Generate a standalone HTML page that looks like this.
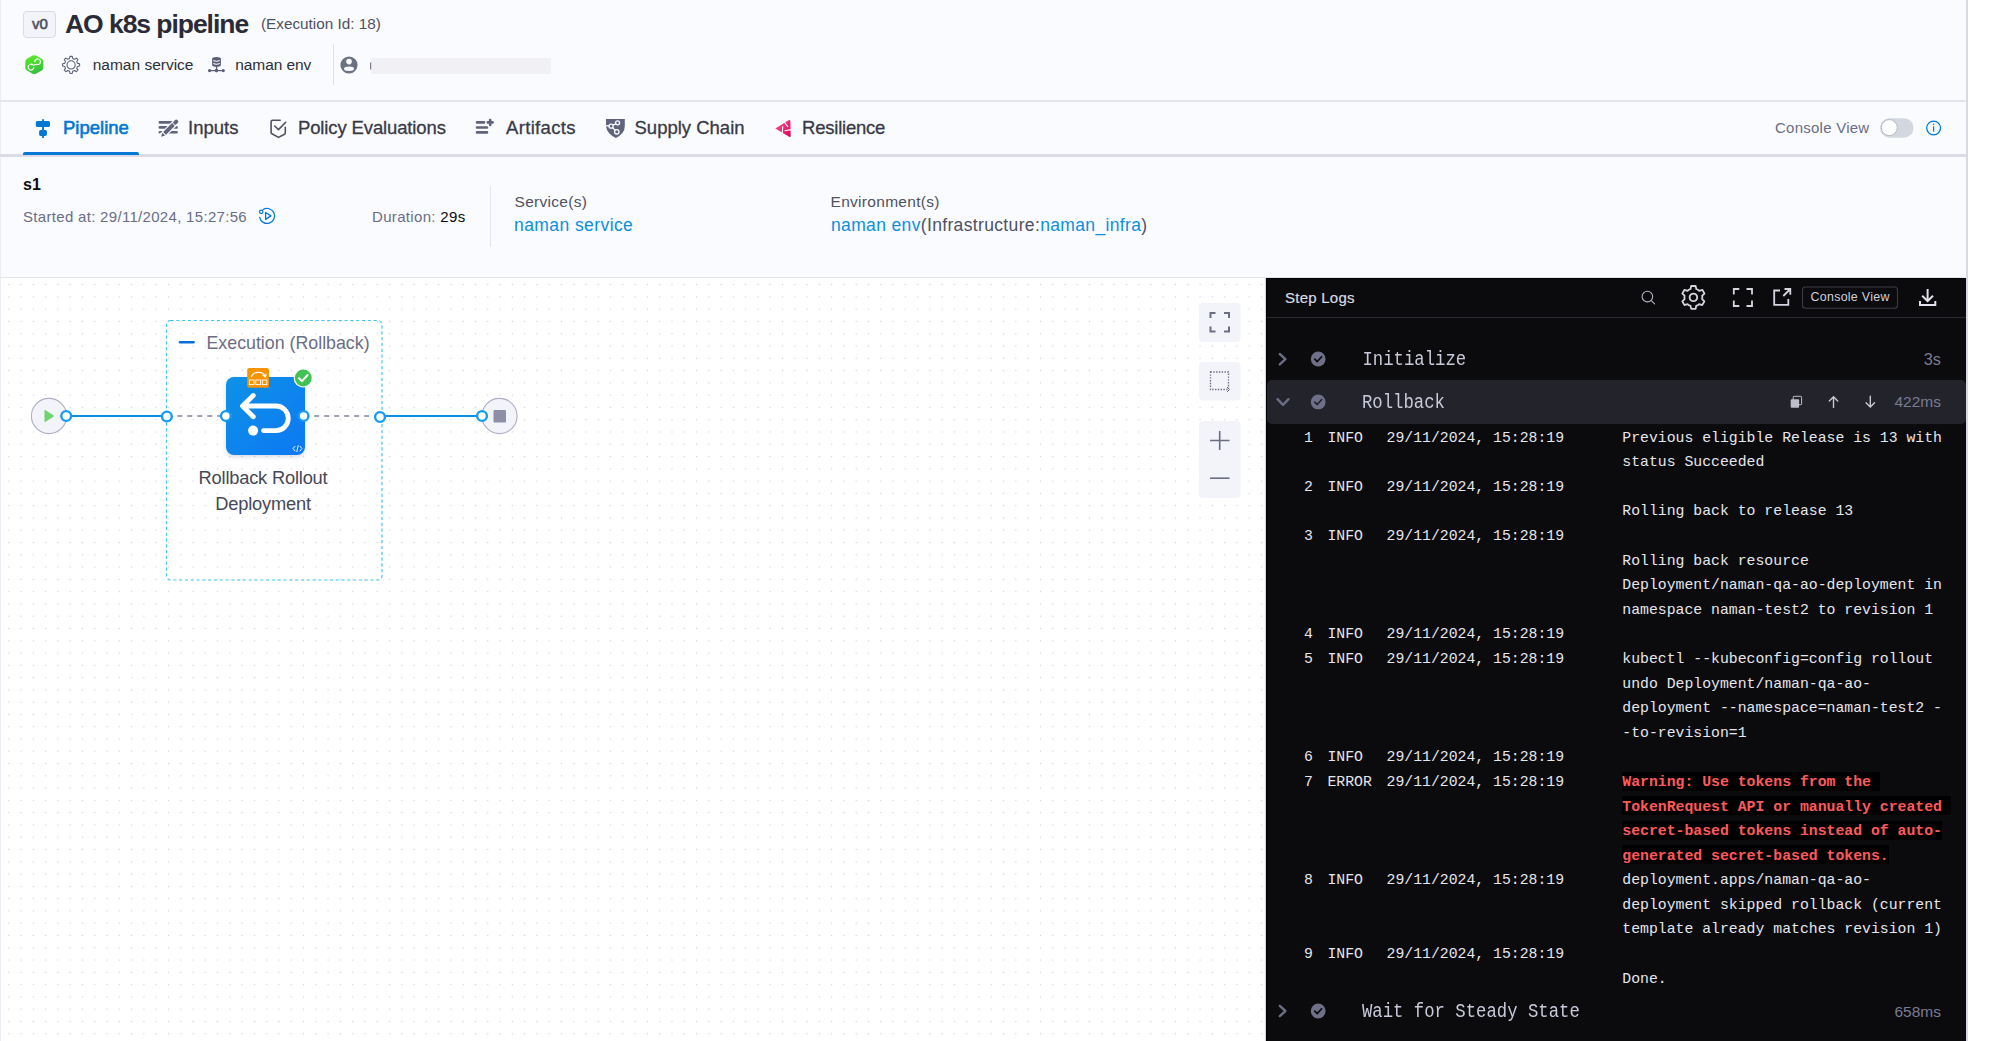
<!DOCTYPE html>
<html><head><meta charset="utf-8">
<style>
*{box-sizing:border-box}
html,body{margin:0;padding:0}
body{width:2000px;height:1041px;overflow:hidden;background:#fff;position:relative;font-family:"Liberation Sans",sans-serif;color:#22222a}
.a{position:absolute;white-space:pre;line-height:1}
.m{font-family:"Liberation Mono",monospace}
svg{position:absolute;overflow:visible}
#main{position:absolute;left:0;top:0;width:1966px;height:1041px;background:#fafbfe;border-left:1px solid #ececf2}
#rb{position:absolute;left:1966px;top:0;width:2px;height:1041px;background:#d9d9e3}
.hl{position:absolute;left:0;width:1966px;background:#e4e4ec}
#canvas{position:absolute;left:0;top:278px;width:1266px;height:763px;background-color:#fff;border-left:1px solid #ececf2;
 background-image:radial-gradient(circle at center,#d2d3e0 0.7px,rgba(255,255,255,0) 1.0px);
 background-size:12.285px 12.285px;background-position:1.66px 0.46px}
#logs{position:absolute;left:1266px;top:278px;width:700px;height:763px;background:#0b0b0d;border-left:1px solid #000;border-top:1px solid #000;box-shadow:-1px 0 1px #d9dae5}
.tab{font-size:18.5px;color:#383946;-webkit-text-stroke:0.3px #383946}
.lg{font-size:14.8px;line-height:24.6px;color:#e6e6ec}
.er{color:#ff5a5a;font-weight:bold}
</style></head>
<body>
<div id="main"></div>
<div id="rb"></div>

<!-- HEADER -->
<div class="a" style="left:23px;top:11px;width:33px;height:27px;border:1px solid #d9dae5;border-radius:4px;background:#f3f3fa"></div>
<div class="a" style="left:32px;top:15.8px;font-size:15px;color:#4f5162;-webkit-text-stroke:0.6px #4f5162">v0</div>
<div class="a" style="left:65px;top:10.5px;font-size:26.5px;font-weight:bold;color:#2a2b36;letter-spacing:-1.05px">AO k8s pipeline</div>
<div class="a" style="left:261px;top:16px;font-size:15.3px;color:#4f5162">(Execution Id: 18)</div>

<div class="a" style="left:92.7px;top:56.5px;font-size:15.5px;color:#2d2e3a">naman service</div>
<div class="a" style="left:235.3px;top:56.5px;font-size:15.5px;letter-spacing:-0.1px;color:#2d2e3a">naman env</div>
<div class="a" style="left:332.5px;top:44px;width:1px;height:41px;background:#e1e1ea"></div>
<div class="a" style="left:371px;top:57.5px;width:180px;height:16px;background:#f0f0f5"></div>

<div class="hl" style="top:100px;height:1.5px"></div>
<div class="hl" style="top:154px;height:2.5px;background:#dcdce6"></div>
<div class="hl" style="top:277px;height:1px"></div>

<!-- HEADER / TAB ICONS -->
<svg style="left:0;top:0" width="2000" height="278" viewBox="0 0 2000 278">
 <defs>
  <linearGradient id="hg" x1="0" y1="0" x2="0.3" y2="1"><stop offset="0" stop-color="#5fee26"/><stop offset="1" stop-color="#38c03c"/></linearGradient>
  <linearGradient id="pg" x1="0" y1="0" x2="1" y2="1"><stop offset="0" stop-color="#f65a98"/><stop offset="1" stop-color="#df0058"/></linearGradient>
 </defs>
 <!-- green hexagon -->
 <path d="M32.6 55.6 Q34.3 54.7 36 55.6 L41.6 58.8 Q43.3 59.8 43.3 61.7 L43.3 67.7 Q43.3 69.6 41.6 70.6 L36 73.8 Q34.3 74.7 32.6 73.8 L27 70.6 Q25.3 69.6 25.3 67.7 L25.3 61.7 Q25.3 59.8 27 58.8 Z" fill="url(#hg)"/>
 <path d="M33.2 65.2 A2.9 2.9 0 1 0 33.9 67.3 M33.2 65.2 L36.6 64.3 A2.8 2.8 0 1 0 34.9 61.6" fill="none" stroke="#fff" stroke-width="1.15" stroke-linecap="round"/>
 <!-- gear outline -->
 <g transform="translate(71.1 64.9)" fill="none" stroke="#5c5e78" stroke-width="1.05" stroke-linejoin="round">
  <path d="M-1.54 -6.42 L-1.14 -8.52 L1.14 -8.52 L1.54 -6.42 L3.45 -5.63 L5.22 -6.84 L6.84 -5.22 L5.63 -3.45 L6.42 -1.54 L8.52 -1.14 L8.52 1.14 L6.42 1.54 L5.63 3.45 L6.84 5.22 L5.22 6.84 L3.45 5.63 L1.54 6.42 L1.14 8.52 L-1.14 8.52 L-1.54 6.42 L-3.45 5.63 L-5.22 6.84 L-6.84 5.22 L-5.63 3.45 L-6.42 1.54 L-8.52 1.14 L-8.52 -1.14 L-6.42 -1.54 L-5.63 -3.45 L-6.84 -5.22 L-5.22 -6.84 L-3.45 -5.63 Z"/>
  <circle cx="0" cy="0" r="4.1"/>
 </g>
 <!-- server/env icon -->
 <g fill="#5c5e78">
  <path d="M212.1 58.8 Q212.1 56.9 216.5 56.9 Q220.9 56.9 220.9 58.8 V65 Q220.9 66.8 216.5 66.8 Q212.1 66.8 212.1 65 Z"/>
  <rect x="215.9" y="66" width="1.3" height="4.6"/>
  <rect x="208.5" y="70" width="15.8" height="1.2"/>
  <circle cx="209.6" cy="70.6" r="1.6"/><circle cx="216.5" cy="70.6" r="1.8"/><circle cx="223.2" cy="70.6" r="1.6"/>
 </g>
 <path d="M213.3 60.6 Q216.5 62 219.7 60.6 M213.3 63.6 Q216.5 65 219.7 63.6" fill="none" stroke="#fafbfe" stroke-width="1.1"/>
 <!-- user icon -->
 <circle cx="349" cy="65" r="8.6" fill="#6b7280"/>
 <circle cx="349" cy="61.6" r="2.8" fill="#fafbfe"/>
 <ellipse cx="349" cy="68.8" rx="5" ry="2.2" fill="#fafbfe"/>
 <rect x="370" y="62.5" width="1.2" height="7" fill="#7a7b90"/>
 <!-- pipeline tab icon -->
 <g fill="#0278d5">
  <rect x="42.1" y="118.9" width="1.9" height="19.2" rx="0.9"/>
  <rect x="35.8" y="121.1" width="14.2" height="5.9" rx="1.6"/>
  <rect x="39.1" y="130" width="7.8" height="5.9" rx="1.6"/>
 </g>
 <!-- inputs icon -->
 <g stroke="#61637d" stroke-width="2.6" stroke-linecap="round" fill="none">
  <path d="M159.8 122.4 H172.5 M159.8 127.4 H167.5 M159.8 132.2 H162.5 M168.5 132.2 H176.6 M173.5 127.4 H176.6"/>
 </g>
 <path d="M161.5 136.5 L178.8 119.2" stroke="#fafbfe" stroke-width="6.4" fill="none"/>
 <g stroke="#61637d" fill="none">
  <path d="M164.6 133.3 L173.4 124.5" stroke-width="3.9"/>
  <path d="M175.2 122.7 L176.3 121.6" stroke-width="3.9" stroke-linecap="round"/>
 </g>
 <path d="M161.1 136.8 L162.3 132.7 L165.2 135.6 Z" fill="#61637d"/>
 <!-- policy icon -->
 <path d="M280.2 120.2 H272.7 Q271.1 120.2 271.1 121.8 V132.6 Q271.1 133.4 271.9 133.8 L278.5 137.4 L284.5 134.2 Q285.3 133.7 285.3 132.8 V127.2" fill="none" stroke="#4f5162" stroke-width="1.6" stroke-linecap="round" stroke-linejoin="round"/>
 <path d="M274.7 126 L278.5 129.6 L285.7 122.3" fill="none" stroke="#4f5162" stroke-width="1.6" stroke-linecap="round" stroke-linejoin="round"/>
 <!-- artifacts icon -->
 <g stroke="#61637d" stroke-width="2.6" stroke-linecap="round" fill="none">
  <path d="M477 122.4 H484 M477 127.5 H487 M477 132.4 H487 M487.8 122.4 H492.6 M490.2 120 V124.9"/>
 </g>
 <!-- supply chain icon -->
 <path d="M606 119 H624.8 V126 Q624.8 133.5 615.8 138 Q606.8 133.5 606 126 Z" fill="#61637d"/>
 <g fill="none" stroke="#fafbfe" stroke-width="1.3">
  <circle cx="617.6" cy="122.8" r="2"/><circle cx="611.1" cy="126.2" r="2"/><circle cx="616.8" cy="131.8" r="2.2"/>
  <path d="M606 125.6 L609.2 126 M612.8 125.2 L615.8 123.8 M612.4 127.6 L615.2 130.2"/>
 </g>
 <!-- resilience icon -->
 <path d="M775.3 128.6 L788.6 120.2 Q790.4 119.4 790.4 121.2 L790.7 135.9 Q790.7 137.6 789.2 136.8 Z" fill="url(#pg)"/>
 <path d="M784 121.6 L788.1 127 M782.7 126.3 L782.2 134.6 M784.6 130.7 L791.2 129.6" fill="none" stroke="#fafbfe" stroke-width="1.15"/>
 <!-- toggle + info -->
 <rect x="1880" y="118.2" width="33.6" height="19.5" rx="9.75" fill="#d3d8e0"/>
 <circle cx="1889.3" cy="127.6" r="8" fill="#fff" stroke="#a8abb8" stroke-width="0.8"/>
 <circle cx="1933.6" cy="128" r="6.9" fill="none" stroke="#0278d5" stroke-width="1.3"/>
 <rect x="1932.95" y="126.3" width="1.3" height="5.2" fill="#0278d5"/>
 <circle cx="1933.6" cy="124.3" r="0.8" fill="#0278d5"/>
 <!-- started-at icon -->
 <path d="M259.7 217.3 A7.5 7.5 0 1 0 263.2 209.5" fill="none" stroke="#0278d5" stroke-width="1.25" stroke-linecap="round"/>
 <circle cx="261.2" cy="211.8" r="1.75" fill="none" stroke="#0278d5" stroke-width="1.2"/>
 <path d="M265.6 212.5 L271 215.9 L265.6 219.4 Z" fill="none" stroke="#0278d5" stroke-width="1.3" stroke-linejoin="round"/>
</svg>
<!-- TABS -->
<div class="a" style="left:23px;top:151.5px;width:116px;height:3px;background:#0278d5;border-radius:2px 2px 0 0"></div>
<div class="a tab" style="left:63px;top:118.5px;color:#0278d5;-webkit-text-stroke:0.6px #0278d5">Pipeline</div>
<div class="a tab" style="left:188px;top:118.5px">Inputs</div>
<div class="a tab" style="left:298px;top:118.5px;letter-spacing:-0.13px">Policy Evaluations</div>
<div class="a tab" style="left:506px;top:118.5px;letter-spacing:0.33px">Artifacts</div>
<div class="a tab" style="left:634.5px;top:118.5px">Supply Chain</div>
<div class="a tab" style="left:802px;top:118.5px;letter-spacing:-0.22px">Resilience</div>

<div class="a" style="left:1775px;top:120px;font-size:15px;letter-spacing:0.25px;color:#6b6d85">Console View</div>

<!-- STAGE INFO -->
<div class="a" style="left:23px;top:177px;font-size:16px;font-weight:bold;color:#0b0b0d">s1</div>
<div class="a" style="left:23px;top:209px;font-size:15px;letter-spacing:0.31px;color:#6b6d85">Started at: 29/11/2024, 15:27:56</div>
<div class="a" style="left:372px;top:209px;font-size:15px;letter-spacing:0.33px;color:#6b6d85">Duration: <span style="color:#0b0b0d">29s</span></div>
<div class="a" style="left:489.5px;top:186px;width:1px;height:61px;background:#e4e4ec"></div>
<div class="a" style="left:514.5px;top:193.5px;font-size:15.5px;letter-spacing:0.3px;color:#4f5162">Service(s)</div>
<div class="a" style="left:514px;top:216.8px;font-size:17.5px;letter-spacing:0.42px;color:#0a8fde">naman service</div>
<div class="a" style="left:830.5px;top:193.5px;font-size:15.5px;letter-spacing:0.3px;color:#4f5162">Environment(s)</div>
<div class="a" style="left:831px;top:216.8px;font-size:17.5px;letter-spacing:0.35px;color:#0a8fde">naman env<span style="color:#4f5162">(Infrastructure:</span>naman_infra<span style="color:#4f5162">)</span></div>

<div id="canvas"></div>
<!-- PIPELINE GRAPH -->
<svg style="left:0;top:0" width="1266" height="1041" viewBox="0 0 1266 1041">
 <defs>
  <linearGradient id="ng" x1="0" y1="0" x2="1" y2="1">
   <stop offset="0" stop-color="#0a92e6"/><stop offset="1" stop-color="#0a78f4"/>
  </linearGradient>
  <filter id="sh" x="-20%" y="-20%" width="140%" height="150%"><feDropShadow dx="0" dy="2" stdDeviation="2" flood-color="#1b3a6a" flood-opacity="0.18"/></filter>
 </defs>
 <!-- dashed group box -->
 <rect x="166.5" y="320.5" width="215.5" height="259.5" rx="4" fill="none" stroke="#45c5f4" stroke-width="1.2" stroke-dasharray="3.2 2.6"/>
 <line x1="180" y1="342.2" x2="193.5" y2="342.2" stroke="#0a6fd8" stroke-width="2.6" stroke-linecap="round"/>
 <!-- start node -->
 <circle cx="49" cy="416" r="17.6" fill="#f3f3fa" stroke="#aeaec4" stroke-width="1.1"/>
 <path d="M44.5 410.8 Q44.5 409.6 45.6 410.2 L53.4 415.2 Q54.3 416 53.4 416.8 L45.6 421.8 Q44.5 422.4 44.5 421.2 Z" fill="#6fd36f"/>
 <!-- end node -->
 <circle cx="499.5" cy="416" r="17.6" fill="#f3f3fa" stroke="#aeaec4" stroke-width="1.1"/>
 <rect x="493.5" y="410" width="12.5" height="12.5" rx="1" fill="#8e8ea6"/>
 <!-- solid lines -->
 <line x1="66" y1="416" x2="167" y2="416" stroke="#0a8fe6" stroke-width="2"/>
 <line x1="380" y1="416" x2="482" y2="416" stroke="#0a8fe6" stroke-width="2"/>
 <!-- dashed lines -->
 <line x1="177.3" y1="416" x2="221" y2="416" stroke="#a0a0b8" stroke-width="2" stroke-dasharray="5 5"/>
 <line x1="314.2" y1="416" x2="375" y2="416" stroke="#a0a0b8" stroke-width="2" stroke-dasharray="5 5"/>
 <!-- node -->
 <rect x="226" y="377" width="79" height="78" rx="8" fill="url(#ng)" filter="url(#sh)"/>
 <path d="M253.3 395.5 L242.5 406 L253.3 416.8 M242.8 406 H276 A12.3 12.3 0 0 1 276 430.6 H263.5" fill="none" stroke="#fff" stroke-width="4.8" stroke-linecap="round" stroke-linejoin="round"/>
 <circle cx="253.1" cy="430.6" r="5" fill="#fff"/>
 <path d="M295 446.3 L293 448.6 L295 450.9 M300 446.3 L302 448.6 L300 450.9 M298.2 445.6 L296.8 451.6" fill="none" stroke="#fff" stroke-width="0.9" stroke-linecap="round"/>
 <!-- orange badge -->
 <rect x="247.2" y="368" width="21.8" height="19.8" rx="2.2" fill="#f59300"/>
 <path d="M251.5 377 A7 5.5 0 0 1 265 376" fill="none" stroke="#fff" stroke-width="1.2"/>
 <path d="M262.6 375 L265.4 376.8 L266.2 373.8" fill="none" stroke="#fff" stroke-width="1.1"/>
 <rect x="249.4" y="380" width="4.6" height="4.6" fill="none" stroke="#fff" stroke-width="0.9"/>
 <rect x="255.8" y="380" width="4.6" height="4.6" fill="none" stroke="#fff" stroke-width="0.9"/>
 <rect x="262.2" y="380" width="4.6" height="4.6" fill="none" stroke="#fff" stroke-width="0.9"/>
 <!-- green check -->
 <circle cx="303.3" cy="378" r="9.6" fill="#fff"/>
 <circle cx="303.3" cy="378" r="8.4" fill="#42c254"/>
 <path d="M299 378.3 L302 381.2 L307.6 375" fill="none" stroke="#fff" stroke-width="2" stroke-linecap="round" stroke-linejoin="round"/>
 <!-- ports -->
 <g fill="#fff" stroke="#169bf4" stroke-width="2.4">
  <circle cx="66.2" cy="416" r="4.9"/>
  <circle cx="166.9" cy="416.5" r="4.9"/>
  <circle cx="225.9" cy="416" r="4.9"/>
  <circle cx="303.6" cy="416" r="4.9"/>
  <circle cx="380" cy="417" r="4.9"/>
  <circle cx="482" cy="416" r="4.9"/>
 </g>
 <!-- zoom controls -->
 <rect x="1199" y="303" width="41.5" height="39" rx="4" fill="#f3f3fa"/>
 <rect x="1199" y="362" width="41.5" height="38.5" rx="4" fill="#f3f3fa"/>
 <rect x="1199" y="421" width="41.5" height="77" rx="4" fill="#f3f3fa"/>
 <path d="M1210.5 318 V313 H1215.5 M1224 313 H1229 V318 M1229 326.5 V331.5 H1224 M1215.5 331.5 H1210.5 V326.5" fill="none" stroke="#6b6d85" stroke-width="2"/>
 <rect x="1210.5" y="372" width="18" height="17.5" fill="none" stroke="#6b6d85" stroke-width="1.3" stroke-dasharray="1.4 1.4"/>
 <path d="M1227 387 L1229.5 389.5 L1227 392" fill="none" stroke="#6b6d85" stroke-width="1"/>
 <path d="M1219.7 431 V450 M1210 440.5 H1229.5" fill="none" stroke="#6b6d85" stroke-width="1.6"/>
 <path d="M1210 478.2 H1229.5" fill="none" stroke="#6b6d85" stroke-width="1.6"/>
</svg>
<div class="a" style="left:206.5px;top:334.6px;font-size:17.8px;color:#6b6d85">Execution (Rollback)</div>
<div class="a" style="left:170px;top:465.2px;width:186px;text-align:center;font-size:18.3px;letter-spacing:-0.2px;line-height:25.9px;color:#464857;white-space:normal">Rollback Rollout<br>Deployment</div>
<div id="logs"></div>
<!-- LOGS PANEL -->
<div class="a" style="left:1267px;top:316.8px;width:699px;height:1px;background:#2a2a32"></div>
<div class="a" style="left:1285px;top:289.5px;font-size:15px;letter-spacing:0.25px;color:#d9dae5;-webkit-text-stroke:0.2px #d9dae5">Step Logs</div>
<div class="a" style="left:1266.5px;top:380px;width:699px;height:43.5px;background:#23232b;border-radius:5px"></div>
<svg style="left:1266px;top:278px" width="700" height="763" viewBox="1266 278 700 763">
 <!-- search -->
 <circle cx="1647.4" cy="296.6" r="5.3" fill="none" stroke="#b4b4c2" stroke-width="1.1"/>
 <path d="M1651.4 300.6 L1654.6 303.8" stroke="#b4b4c2" stroke-width="1.1" stroke-linecap="round"/>
 <!-- gear -->
 <g transform="translate(1693.4 297.4)" fill="none" stroke="#d5d5df" stroke-width="1.8" stroke-linejoin="round">
  <path d="M-2.2 -10.4 L2.2 -10.4 L2.9 -7.4 Q4.6 -6.8 5.9 -5.6 L8.9 -6.6 L11.1 -2.8 L8.8 -0.7 Q9.1 1.1 8.7 2.8 L11.0 4.9 L8.8 8.7 L5.8 7.7 Q4.5 8.9 2.8 9.5 L2.2 12.5 L-2.2 12.5 L-2.9 9.5 Q-4.6 8.9 -5.9 7.7 L-8.9 8.7 L-11.1 4.9 L-8.8 2.8 Q-9.2 1.0 -8.8 -0.7 L-11.1 -2.8 L-8.9 -6.6 L-5.9 -5.6 Q-4.6 -6.8 -2.9 -7.4 Z" transform="translate(0 -1)"/>
  <circle cx="0" cy="0" r="3.8"/>
 </g>
 <!-- fullscreen -->
 <path d="M1733.8 294.5 V289 H1739.3 M1746.5 289 H1752 V294.5 M1752 300.5 V306 H1746.5 M1739.3 306 H1733.8 V300.5" fill="none" stroke="#d5d5df" stroke-width="1.8"/>
 <!-- external -->
 <path d="M1780 290.5 H1774.2 V304.8 H1788.3 V299" fill="none" stroke="#d5d5df" stroke-width="1.8"/>
 <path d="M1783.3 296 L1789.8 289.5 M1784.5 289 H1790.3 V294.8" fill="none" stroke="#d5d5df" stroke-width="1.8"/>
 <!-- console view button -->
 <rect x="1802.5" y="287" width="95" height="21.3" rx="3" fill="none" stroke="#3c3c48" stroke-width="1.1"/>
 <!-- download -->
 <path d="M1927.6 289 V301 M1922.2 295.8 L1927.6 301.2 L1933 295.8 M1920 301 V305 H1935.3 V301" fill="none" stroke="#e2e2ea" stroke-width="2"/>
 <!-- step row icons -->
 <path d="M1279.8 354 L1285.4 359.2 L1279.8 364.4" fill="none" stroke="#6b6d85" stroke-width="2.4" stroke-linecap="round" stroke-linejoin="round"/>
 <path d="M1277.5 399.2 L1283 404.8 L1288.5 399.2" fill="none" stroke="#6b6d85" stroke-width="2.4" stroke-linecap="round" stroke-linejoin="round"/>
 <path d="M1279.8 1005.8 L1285.4 1011 L1279.8 1016.2" fill="none" stroke="#6b6d85" stroke-width="2.4" stroke-linecap="round" stroke-linejoin="round"/>
 <g fill="#6f7088">
  <circle cx="1318.2" cy="359" r="7.4"/>
  <circle cx="1318.2" cy="401.9" r="7.4"/>
  <circle cx="1318.2" cy="1011" r="7.4"/>
 </g>
 <g fill="none" stroke="#0b0b0d" stroke-width="1.7" stroke-linecap="round" stroke-linejoin="round">
  <path d="M1314.8 359.2 L1317.2 361.6 L1321.6 356.8"/>
  <path d="M1314.8 402.1 L1317.2 404.5 L1321.6 399.7" stroke="#23232b"/>
  <path d="M1314.8 1011.2 L1317.2 1013.6 L1321.6 1008.8"/>
 </g>
 <!-- copy -->
 <rect x="1793.2" y="396.3" width="8.4" height="8.4" rx="0.8" fill="none" stroke="#bdbdcc" stroke-width="1"/>
 <rect x="1790.7" y="399.2" width="8.4" height="8.5" rx="1" fill="#bdbdcc"/>
 <!-- up / down -->
 <path d="M1833.5 407.4 V396.8 M1829.3 401 L1833.5 396.8 L1837.7 401" fill="none" stroke="#c9c9d6" stroke-width="1.4" stroke-linecap="round"/>
 <path d="M1870.3 396.3 V406.9 M1866.1 402.7 L1870.3 406.9 L1874.5 402.7" fill="none" stroke="#c9c9d6" stroke-width="1.4" stroke-linecap="round"/>
</svg>
<div class="a" style="left:1810.5px;top:290.5px;font-size:12.4px;letter-spacing:0.3px;color:#d0d0da">Console View</div>
<div class="a" style="left:1880px;top:351.2px;width:61px;text-align:right;font-size:16.3px;color:#7a7b93">3s</div>
<div class="a" style="left:1860px;top:393.8px;width:81px;text-align:right;font-size:15.5px;color:#7a7b93">422ms</div>
<div class="a" style="left:1860px;top:1003.8px;width:81px;text-align:right;font-size:15.5px;color:#7a7b93">658ms</div>
<div class="a m" style="left:1362.5px;top:352.6px;font-size:17.3px;color:#c8c9da;transform:scaleY(1.12);transform-origin:0 100%">Initialize</div>
<div class="a m" style="left:1362px;top:395.6px;font-size:17.3px;color:#c8c9da;transform:scaleY(1.12);transform-origin:0 100%">Rollback</div>
<div class="a m" style="left:1362px;top:1005.2px;font-size:17.3px;color:#c8c9da;transform:scaleY(1.12);transform-origin:0 100%">Wait for Steady State</div>

<!-- LOG LINES -->
<div class="a" style="left:1622.3px;top:771.55px;width:257.5px;height:19px;background:#000"></div>
<div class="a" style="left:1622.3px;top:796.15px;width:328.6px;height:19px;background:#000"></div>
<div class="a" style="left:1622.3px;top:820.75px;width:319.7px;height:19px;background:#000"></div>
<div class="a" style="left:1622.3px;top:845.35px;width:266.4px;height:19px;background:#000"></div>
<div class="a m lg" style="left:1304px;top:425.6px;width:8.9px;text-align:right">1

2

3



4
5



6
7



8


9
</div>
<div class="a m lg" style="left:1327.4px;top:425.6px">INFO

INFO

INFO



INFO
INFO



INFO
ERROR



INFO


INFO
</div>
<div class="a m lg" style="left:1386.5px;top:425.6px">29/11/2024, 15:28:19

29/11/2024, 15:28:19

29/11/2024, 15:28:19



29/11/2024, 15:28:19
29/11/2024, 15:28:19



29/11/2024, 15:28:19
29/11/2024, 15:28:19



29/11/2024, 15:28:19


29/11/2024, 15:28:19
</div>
<div class="a m lg" style="left:1622.3px;top:425.6px">Previous eligible Release is 13 with
status Succeeded

Rolling back to release 13

Rolling back resource
Deployment/naman-qa-ao-deployment in
namespace naman-test2 to revision 1

kubectl --kubeconfig=config rollout
undo Deployment/naman-qa-ao-
deployment --namespace=naman-test2 -
-to-revision=1

<span class="er">Warning: Use tokens from the </span>
<span class="er">TokenRequest API or manually created </span>
<span class="er">secret-based tokens instead of auto-</span>
<span class="er">generated secret-based tokens.</span>
deployment.apps/naman-qa-ao-
deployment skipped rollback (current
template already matches revision 1)

Done.</div>
</body></html>
